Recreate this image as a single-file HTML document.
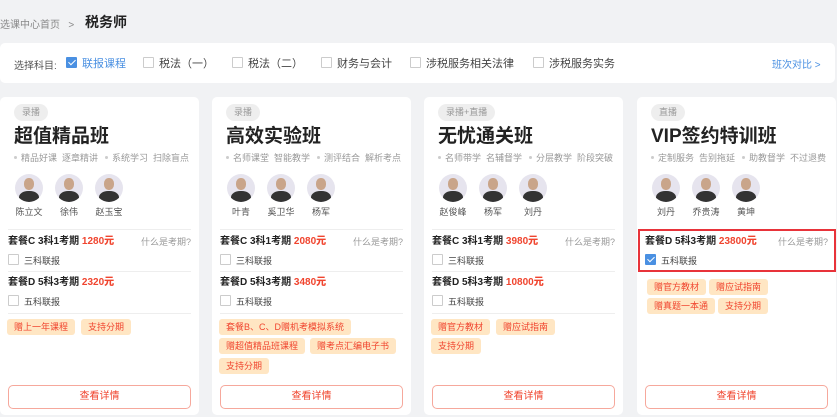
<!DOCTYPE html>
<html><head><meta charset="utf-8"><style>
*{margin:0;padding:0;box-sizing:border-box}
body{width:837px;height:417px;background:#f1f2f4;font-family:"Liberation Sans","Noto Sans CJK SC",sans-serif;position:relative;overflow:hidden;color:#333}
.a{position:absolute;white-space:nowrap}
.bar{left:0;top:43px;width:835px;height:40px;background:#fff;border-radius:5px}
.cb{display:inline-block;width:11px;height:11px;border:1px solid #ccc;background:#fff;vertical-align:-1px;margin-right:5px;border-radius:1px}
.cb.on{background:#4a90e2;border-color:#4a90e2;position:relative}
.cb.on:after{content:"";position:absolute;left:3px;top:0px;width:3px;height:6px;border:solid #fff;border-width:0 1.5px 1.5px 0;transform:rotate(45deg)}
.card{top:97px;width:199px;height:318px;background:#fff;border-radius:5px}
.tag{left:14px;top:7px;height:17px;line-height:17px;padding:0 8px;background:#eee;border-radius:9px;font-size:9px;color:#999}
.ttl{left:14px;top:27px;font-size:19px;font-weight:bold;color:#222;line-height:26px}
.ft{left:12px;top:55px;font-size:9px;color:#999;line-height:12px}
.ft i{display:inline-block;width:3px;height:3px;background:#ccc;border-radius:50%;vertical-align:2px;margin:0 4px 0 2px}
.av{top:77px;width:28px;height:28px;border-radius:50%;background:#e6e4ee;overflow:hidden}
.av:before{content:"";position:absolute;left:9px;top:4px;width:10px;height:12px;border-radius:45%;background:#c9a58a}
.av:after{content:"";position:absolute;left:4px;top:17px;width:20px;height:14px;border-radius:45% 45% 0 0;background:#333}
.nm{top:109px;width:28px;text-align:center;font-size:9px;color:#555;line-height:12px}
.hr{left:8px;width:183px;height:1px;background:#eee}
.pk{left:8px;font-size:10px;font-weight:bold;color:#222;line-height:14px}
.pk b{color:#f0442e}
.wh{right:8px;font-size:9px;color:#999;line-height:14px}
.ck{left:8px;font-size:9px;color:#444;line-height:13px}
.gt{height:16px;line-height:16px;padding:0 7px;background:#ffe6c3;border-radius:3px;font-size:9px;color:#f0442e}
.btn{left:8px;top:288px;width:183px;height:24px;border:1px solid #f6a89c;border-radius:5px;text-align:center;line-height:22px;font-size:10px;color:#f0442e}
</style></head><body>
<div class="a" style="left:0;top:16px;font-size:10px;color:#888">选课中心首页 &nbsp;&nbsp;&gt;</div>
<div class="a" style="left:85px;top:12px;font-size:14px;font-weight:bold;color:#222">税务师</div>
<div class="a bar"></div>
<div class="a" style="left:14px;top:57px;font-size:10px;color:#555">选择科目:</div>
<div class="a" style="left:66px;top:55px;font-size:11px;color:#4a90e2"><span class="cb on"></span>联报课程</div>
<div class="a" style="left:143px;top:55px;font-size:11px;color:#444"><span class="cb"></span>税法（一）</div>
<div class="a" style="left:232px;top:55px;font-size:11px;color:#444"><span class="cb"></span>税法（二）</div>
<div class="a" style="left:321px;top:55px;font-size:11px;color:#444"><span class="cb"></span>财务与会计</div>
<div class="a" style="left:410px;top:55px;font-size:11px;color:#444"><span class="cb"></span>涉税服务相关法律</div>
<div class="a" style="left:533px;top:55px;font-size:11px;color:#444"><span class="cb"></span>涉税服务实务</div>
<div class="a" style="left:772px;top:56px;font-size:10px;color:#4a90e2">班次对比 &gt;</div>

<!-- card1 -->
<div class="a card" style="left:0">
<div class="a tag">录播</div><div class="a ttl">超值精品班</div>
<div class="a ft"><i></i>精品好课 &nbsp;逐章精讲 &nbsp;<i></i>系统学习 &nbsp;扫除盲点</div>
<div class="a av" style="left:15px"></div><div class="a av" style="left:55px"></div><div class="a av" style="left:95px"></div>
<div class="a nm" style="left:15px">陈立文</div><div class="a nm" style="left:55px">徐伟</div><div class="a nm" style="left:95px">赵玉宝</div>
<div class="a hr" style="top:132px"></div>
<div class="a pk" style="top:138px">套餐C 3科1考期 <b>1280元</b></div><div class="a wh" style="top:138px">什么是考期?</div>
<div class="a ck" style="top:157px"><span class="cb"></span>三科联报</div>
<div class="a hr" style="top:174px"></div>
<div class="a pk" style="top:179px">套餐D 5科3考期 <b>2320元</b></div>
<div class="a ck" style="top:198px"><span class="cb"></span>五科联报</div>
<div class="a hr" style="top:216px"></div>
<div class="a gt" style="left:7px;top:222px">赠上一年课程</div><div class="a gt" style="left:81px;top:222px">支持分期</div>
<div class="a btn">查看详情</div>
</div>

<!-- card2 -->
<div class="a card" style="left:212px">
<div class="a tag">录播</div><div class="a ttl">高效实验班</div>
<div class="a ft"><i></i>名师课堂 &nbsp;智能教学 &nbsp;<i></i>测评结合 &nbsp;解析考点</div>
<div class="a av" style="left:15px"></div><div class="a av" style="left:55px"></div><div class="a av" style="left:95px"></div>
<div class="a nm" style="left:15px">叶青</div><div class="a nm" style="left:55px">奚卫华</div><div class="a nm" style="left:95px">杨军</div>
<div class="a hr" style="top:132px"></div>
<div class="a pk" style="top:138px">套餐C 3科1考期 <b>2080元</b></div><div class="a wh" style="top:138px">什么是考期?</div>
<div class="a ck" style="top:157px"><span class="cb"></span>三科联报</div>
<div class="a hr" style="top:174px"></div>
<div class="a pk" style="top:179px">套餐D 5科3考期 <b>3480元</b></div>
<div class="a ck" style="top:198px"><span class="cb"></span>五科联报</div>
<div class="a hr" style="top:216px"></div>
<div class="a gt" style="left:7px;top:222px">套餐B、C、D赠机考模拟系统</div>
<div class="a gt" style="left:7px;top:241px">赠超值精品班课程</div><div class="a gt" style="left:98px;top:241px">赠考点汇编电子书</div>
<div class="a gt" style="left:7px;top:261px">支持分期</div>
<div class="a btn">查看详情</div>
</div>

<!-- card3 -->
<div class="a card" style="left:424px">
<div class="a tag">录播+直播</div><div class="a ttl">无忧通关班</div>
<div class="a ft"><i></i>名师带学 &nbsp;名辅督学 &nbsp;<i></i>分层教学 &nbsp;阶段突破</div>
<div class="a av" style="left:15px"></div><div class="a av" style="left:55px"></div><div class="a av" style="left:95px"></div>
<div class="a nm" style="left:15px">赵俊峰</div><div class="a nm" style="left:55px">杨军</div><div class="a nm" style="left:95px">刘丹</div>
<div class="a hr" style="top:132px"></div>
<div class="a pk" style="top:138px">套餐C 3科1考期 <b>3980元</b></div><div class="a wh" style="top:138px">什么是考期?</div>
<div class="a ck" style="top:157px"><span class="cb"></span>三科联报</div>
<div class="a hr" style="top:174px"></div>
<div class="a pk" style="top:179px">套餐D 5科3考期 <b>10800元</b></div>
<div class="a ck" style="top:198px"><span class="cb"></span>五科联报</div>
<div class="a hr" style="top:216px"></div>
<div class="a gt" style="left:7px;top:222px">赠官方教材</div><div class="a gt" style="left:72px;top:222px">赠应试指南</div>
<div class="a gt" style="left:7px;top:241px">支持分期</div>
<div class="a btn">查看详情</div>
</div>

<!-- card4 -->
<div class="a card" style="left:637px">
<div class="a tag">直播</div><div class="a ttl">VIP签约特训班</div>
<div class="a ft"><i></i>定制服务 &nbsp;告别拖延 &nbsp;<i></i>助教督学 &nbsp;不过退费</div>
<div class="a av" style="left:15px"></div><div class="a av" style="left:55px"></div><div class="a av" style="left:95px"></div>
<div class="a nm" style="left:15px">刘丹</div><div class="a nm" style="left:55px">乔贵涛</div><div class="a nm" style="left:95px">黄坤</div>
<div class="a" style="left:1px;top:132px;width:198px;height:43px;border:2px solid #e8333a"></div>
<div class="a pk" style="top:138px">套餐D 5科3考期 <b>23800元</b></div><div class="a wh" style="top:138px">什么是考期?</div>
<div class="a ck" style="top:157px"><span class="cb on"></span>五科联报</div>
<div class="a gt" style="left:10px;top:182px">赠官方教材</div><div class="a gt" style="left:72px;top:182px">赠应试指南</div>
<div class="a gt" style="left:10px;top:201px">赠真题一本通</div><div class="a gt" style="left:81px;top:201px">支持分期</div>
<div class="a btn">查看详情</div>
</div>
</body></html>
